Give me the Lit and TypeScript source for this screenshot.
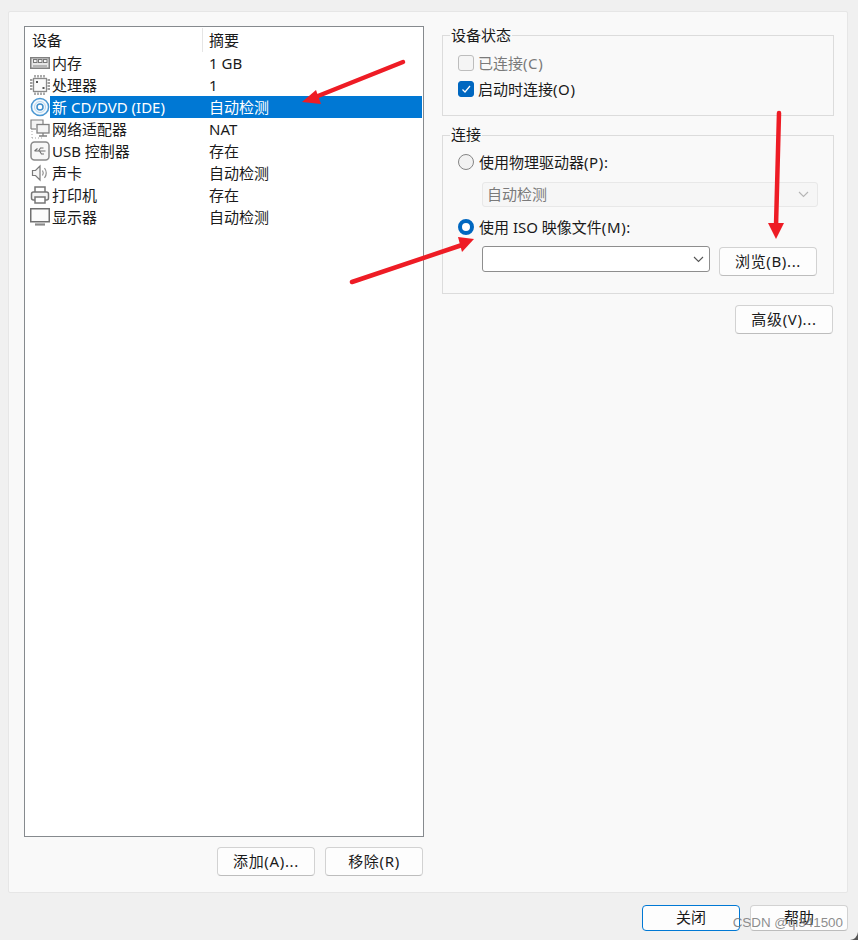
import { LitElement, html, css, svg } from "lit";
import { customElement } from "lit/decorators.js";

const g = "#808080";
const icons: Record<string, unknown> = {
  mem: svg`<rect x=".75" y="4.75" width="18.500" height="10.500" fill="#e6e6e6" stroke="${g}" stroke-width="1.500"/><rect x="3.500" y="6.500" width="3.500" height="3" fill="#f4f4f4" stroke="#777"/><rect x="8.500" y="6.500" width="3.500" height="3" fill="#f4f4f4" stroke="#777"/><rect x="13.500" y="6.500" width="3.500" height="3" fill="#f4f4f4" stroke="#777"/><path d="M3 13h14" stroke="#a5a5a5" stroke-width="1.500"/>`,
  cpu: svg`<rect x="3.500" y="3.500" width="13" height="13" fill="#fafafa" stroke="#8a8a8a" stroke-width="1.300"/><rect x="6" y="6" width="2" height="2" fill="#555"/><rect x="12.500" y="12" width="2" height="2" fill="#555"/><path d="M5 0v2.500M8 0v2.500M11 0v2.500M14 0v2.500M5 17.500v2.500M8 17.500v2.500M11 17.500v2.500M14 17.500v2.500M0 5h2.500M0 8h2.500M0 11h2.500M0 14h2.500M17.500 5h2.500M17.500 8h2.500M17.500 11h2.500M17.500 14h2.500" stroke="#808080" stroke-width="1.300"/>`,
  cd: svg`<circle cx="10" cy="10" r="8.600" fill="#f4f9fd" stroke="#4a97d2" stroke-width="1.500"/><circle cx="10" cy="10" r="5.500" fill="none" stroke="#b5d5ec"/><circle cx="10" cy="10" r="3" fill="#fff" stroke="#3f8ecb" stroke-width="1.500"/>`,
  net: svg`<path d="M1 10V1h12v4" fill="#f4f4f4" stroke="${g}" stroke-width="1.200"/><path d="M1 10h5" stroke="${g}" stroke-width="1.200"/><rect x="7" y="5.500" width="12" height="8.500" fill="#f4f4f4" stroke="${g}" stroke-width="1.300"/><path d="M13 14v3M9 17h8" stroke="${g}" stroke-width="1.300"/><path d="M2 12v7M2 19h10" stroke="#a5a5a5" stroke-dasharray="1 2"/>`,
  usb: svg`<rect x="1" y="1" width="18" height="18" rx="3.500" fill="#f7f7f7" stroke="#8a8a8a" stroke-width="1.500"/><path d="M4.500 10h11M4.500 10l3-2.500M8.500 10l2-3h3M9.500 10l2 3h2.500" fill="none" stroke="#707070" stroke-width="1.100"/>`,
  sound: svg`<path d="M2.500 7.500h3l4.500-4.500v14l-4.500-4.500h-3z" fill="#f6f6f6" stroke="#7a7a7a" stroke-width="1.200"/><path d="M12.500 7.500q1.500 2.500 0 5M14.500 5q3.500 5 0 10" fill="none" stroke="#8f8f8f" stroke-width="1.200"/>`,
  print: svg`<path d="M5 7V2h10v5" fill="#fff" stroke="#777" stroke-width="1.500"/><rect x="1.500" y="7" width="17" height="8" rx="2" fill="#f4f4f4" stroke="#777" stroke-width="1.500"/><rect x="5" y="12" width="10" height="6" fill="#fff" stroke="#777" stroke-width="1.500"/>`,
  disp: svg`<rect x=".75" y="1.750" width="18.500" height="13" fill="#fbfbfb" stroke="#707070" stroke-width="1.500"/><path d="M5 17.500h10" stroke="#8a8a8a" stroke-width="2.200"/>`,
};

const rows = [
  ["mem", "内存", "1 GB"],
  ["cpu", "处理器", "1"],
  ["cd", "新 CD/DVD (IDE)", "自动检测"],
  ["net", "网络适配器", "NAT"],
  ["usb", "USB 控制器", "存在"],
  ["sound", "声卡", "自动检测"],
  ["print", "打印机", "存在"],
  ["disp", "显示器", "自动检测"],
];

const chevron = svg`<path d="M1 1l4.500 4.500L10 1" fill="none" stroke="currentColor" stroke-width="1.100"/>`;

@customElement("app-root")
export class AppRoot extends LitElement {
  static styles = css`
    :host {
      display: block;
      width: 858px;
      height: 940px;
      position: relative;
      overflow: hidden;
      background: #f0f0f0;
      color: #1a1a1a;
      font: 15px/22px "Noto Sans", "Noto Sans CJK SC", sans-serif;
    }
    * { box-sizing: border-box; }
    .panel {
      margin: 11px 10px 0 8px;
      height: 882px;
      background: #f9f9f9;
      border: 1px solid #e6e6e6;
      border-radius: 2px;
      padding: 14px 14px 0 15px;
      display: flex;
      gap: 18px;
    }
    .left { width: 400px; display: flex; flex-direction: column; flex: none; }
    .list {
      height: 811px;
      background: #fff;
      border: 1px solid #868a8e;
      padding-top: 1px;
    }
    .head { display: flex; height: 24px; line-height: 24px; }
    .head span:first-child { width: 178px; padding-left: 7px; border-right: 1px solid #e5e5e5; }
    .head span:last-child { padding-left: 6px; }
    .row { display: flex; height: 22px; align-items: center; white-space: nowrap; }
    .row svg { width: 20px; height: 20px; margin-left: 5px; flex: none; }
    .name { width: 154px; padding-left: 2px; height: 22px; flex: none; }
    .sum { flex: 1; height: 22px; padding-left: 5px; margin-right: 1px; }
    .sel .name, .sel .sum { background: #0078d4; color: #fff; }
    .k { letter-spacing: 0.6px; }
    .btns { display: flex; justify-content: flex-end; gap: 10px; margin-top: 10px; padding-right: 1px; }
    .btn {
      width: 98px;
      height: 29px;
      padding-bottom: 2px;
      background: #fdfdfd;
      border: 1px solid #d2d2d2;
      border-bottom-color: #bdbdbd;
      border-radius: 4px;
      display: flex;
      align-items: center;
      justify-content: center;
      letter-spacing: 0.65px;
    }
    .right { width: 392px; flex: none; display: flex; flex-direction: column; padding-top: 9px; }
    .group {
      position: relative;
      border: 1px solid #dcdcdc;
      padding: 0 15px;
    }
    .group > .title {
      position: absolute;
      left: 7px;
      top: -12px;
      background: #f9f9f9;
      padding: 0 1px;
      line-height: 22px;
    }
    .g2 > .title { top: -13px; }
    .g1 { height: 81px; padding-top: 16px; margin-bottom: 19px; }
    .g2 { height: 159px; padding-top: 15px; }
    .opt { display: flex; align-items: center; gap: 4px; height: 22px; white-space: pre; }
    .g2 .opt { gap: 5px; }
    .g1 .opt + .opt { margin-top: 4px; }
    .dis { color: #7a7a7a; }
    .check {
      width: 16px; height: 16px; border-radius: 3px; border: 1px solid #bdbdbd;
      background: #f5f5f5; flex: none; display: flex; align-items: center; justify-content: center;
    }
    .check.on { background: #0067c0; border-color: #0067c0; }
    .check svg { width: 10px; height: 10px; }
    .radio {
      width: 16px; height: 16px; border-radius: 50%; border: 1px solid #858585;
      background: #f2f2f2; flex: none;
    }
    .radio.on { border: 4.500px solid #0067c0; background: #fff; }
    .select {
      height: 25px; width: 336px; background: #f6f6f6;
      border: 1px solid #e8e8e8; border-radius: 3px; margin: 9px 0 9px 24px;
      padding: 0 8px 0 4px; color: #7a7a7a;
      display: flex; align-items: center; justify-content: space-between; line-height: 23px;
    }
    .select svg, .combo svg { width: 11px; height: 7px; }
    .select svg { color: #b5b5b5; }
    .line { display: flex; align-items: flex-start; margin-left: 24px; margin-top: 8px; gap: 9px; }
    .combo {
      width: 228px; height: 26px; background: #fff; border: 1px solid #8e8e8e;
      border-radius: 3px; display: flex; align-items: center; justify-content: flex-end;
      padding-right: 5px; color: #555;
    }
    .line .btn { margin-top: 1px; }
    .adv { display: flex; justify-content: flex-end; margin-top: 11px; padding-right: 1px; }
    .foot { display: flex; justify-content: flex-end; gap: 10px; margin-top: 12px; padding-right: 10px; }
    .foot .btn { width: 98px; height: 26px; line-height: 24px; letter-spacing: 0; }
    .foot .primary { border: 1px solid #0078d4; }
    .overlay { position: absolute; left: 0; top: 0; width: 858px; height: 940px; pointer-events: none; }
    .mark {
      position: absolute; right: 15px; top: 913px; font: 13.400px/20px "Liberation Sans", sans-serif;
      color: rgba(120, 120, 120, 0.85);
    }
  `;

  private label(text: string) {
    const m = text.match(/^(.*?)(\(.\):?|\(.\))(\.*)$/);
    return m ? html`${m[1]}<span class="k">${m[2]}</span>${m[3]}` : text;
  }

  render() {
    return html`
      <div class="panel">
        <div class="left">
          <div class="list">
            <div class="head"><span>设备</span><span>摘要</span></div>
            ${rows.map(
              (r) => html`<div class="row ${r[0] === "cd" ? "sel" : ""}">
                <svg viewBox="0 0 20 20">${icons[r[0]]}</svg>
                <span class="name">${r[1]}</span><span class="sum">${r[2]}</span>
              </div>`
            )}
          </div>
          <div class="btns"><div class="btn">添加(A)...</div><div class="btn">移除(R)</div></div>
        </div>
        <div class="right">
          <div class="group g1">
            <span class="title">设备状态</span>
            <div class="opt dis"><span class="check"></span><span>${this.label("已连接(C)")}</span></div>
            <div class="opt">
              <span class="check on"><svg viewBox="0 0 10 10"><path d="M1.500 5.500l2.500 2.500 5-6" fill="none" stroke="#fff" stroke-width="1.200"/></svg></span><span>${this.label("启动时连接(O)")}</span>
            </div>
          </div>
          <div class="group g2">
            <span class="title">连接</span>
            <div class="opt"><span class="radio"></span><span>${this.label("使用物理驱动器(P):")}</span></div>
            <div class="select">自动检测<svg viewBox="0 0 11 7">${chevron}</svg></div>
            <div class="opt"><span class="radio on"></span><span>${this.label("使用 ISO 映像文件(M):")}</span></div>
            <div class="line">
              <div class="combo"><svg viewBox="0 0 11 7">${chevron}</svg></div>
              <div class="btn">浏览(B)...</div>
            </div>
          </div>
          <div class="adv"><div class="btn">高级(V)...</div></div>
        </div>
      </div>
      <div class="foot"><div class="btn primary">关闭</div><div class="btn">帮助</div></div>
      <div class="mark">CSDN @qi341500</div>
      <svg class="overlay" viewBox="0 0 858 940">
        <g fill="none" stroke="#ee1c25" stroke-width="4.500" stroke-linecap="round">
          <path d="M403 62L318 96"/>
          <path d="M779 113L776 226"/>
          <path d="M352 282L462 245"/>
        </g>
        <g fill="#ee1c25">
          <path d="M302 102L316 90L321 104z"/>
          <path d="M776 239L768 223L784 223z"/>
          <path d="M474 239L458 237L462 252z"/>
        </g>
        <path d="M858 932Q857 939 850 940H858z" fill="#555"/>
      </svg>
    `;
  }
}
